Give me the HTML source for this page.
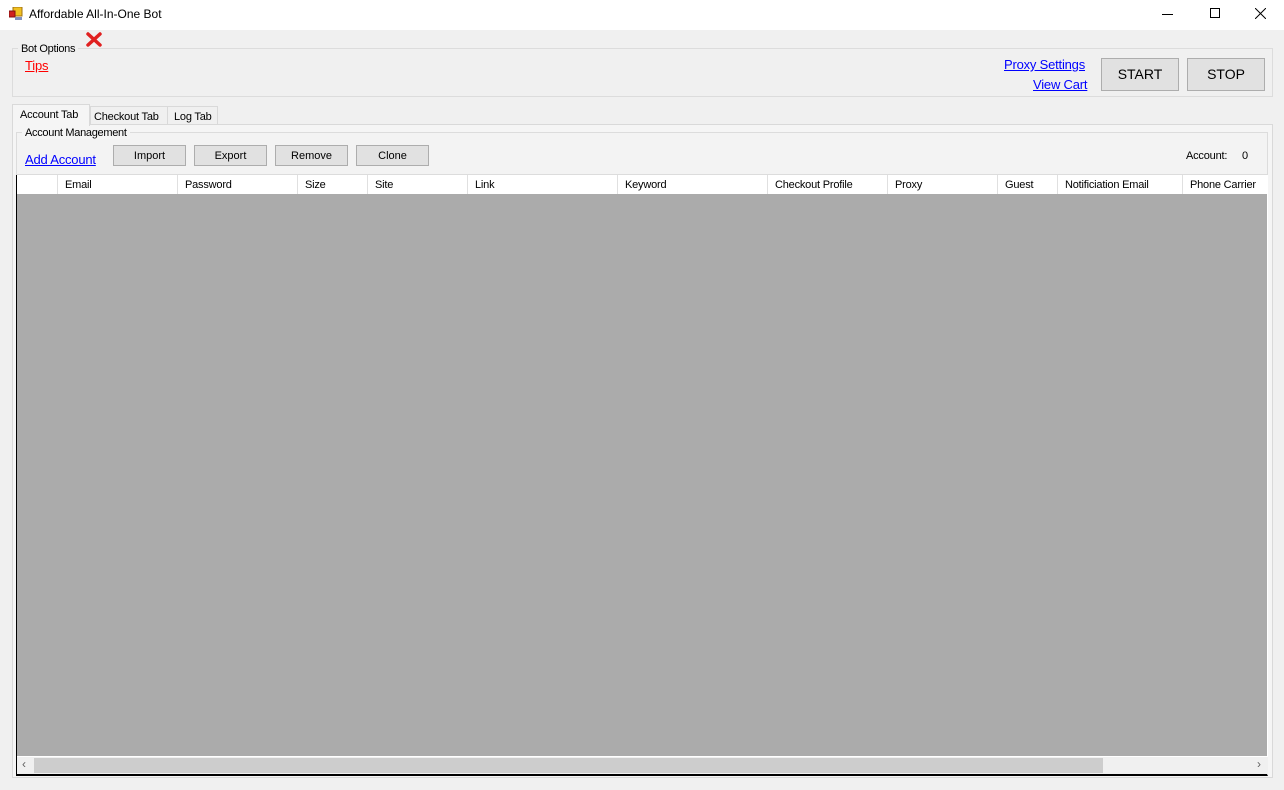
<!DOCTYPE html><html><head><style>
*{margin:0;padding:0;box-sizing:border-box}
body{width:1284px;height:790px;background:#f0f0f0;font-family:"Liberation Sans",sans-serif;font-size:11px;color:#000;position:relative;overflow:hidden}
.a{position:absolute}
.btn{position:absolute;background:#e1e1e1;border:1px solid #adadad;text-align:center}
.lk{position:absolute;color:#0000ff;text-decoration:underline;font-size:13px;white-space:nowrap;letter-spacing:-0.2px}
.col{position:absolute;top:0;height:19px;border-left:1px solid #e0e0e0;padding-left:7px;line-height:21px;white-space:nowrap;letter-spacing:-0.2px}
</style></head><body>
<div class="a" style="left:0;top:0;width:1284px;height:30px;background:#fff"></div>
<svg class="a" style="left:9px;top:7px" width="14" height="14"><rect x="4" y="0" width="9" height="9" fill="#f0c020" stroke="#a07010"/><rect x="0" y="4" width="6" height="6" fill="#d02020" stroke="#801010"/><rect x="6" y="10" width="7" height="3" fill="#8090c0"/></svg>
<div class="a" style="left:29px;top:7px;font-size:12px">Affordable All-In-One Bot</div>
<div class="a" style="left:1162px;top:14px;width:11px;height:1px;background:#000"></div>
<div class="a" style="left:1210px;top:8px;width:10px;height:10px;border:1px solid #000"></div>
<svg class="a" style="left:1255px;top:8px" width="11" height="11"><path d="M0 0L11 11M11 0L0 11" stroke="#000" stroke-width="1"/></svg>

<div class="a" style="left:12px;top:48px;width:1261px;height:49px;border:1px solid #dcdcdc"></div>
<div class="a" style="left:18px;top:43px;padding:0 3px;background:#f0f0f0;letter-spacing:-0.3px">Bot Options</div>
<svg class="a" style="left:86px;top:32px" width="16" height="15"><path d="M2 2L14 13M14 2L2 13" stroke="#e02020" stroke-width="3.5" stroke-linecap="round"/></svg>
<div class="lk" style="left:25px;top:58px;color:#ff0000">Tips</div>
<div class="lk" style="left:1004px;top:57px">Proxy Settings</div>
<div class="lk" style="left:1033px;top:77px">View Cart</div>
<div class="btn" style="left:1101px;top:58px;width:78px;height:33px;line-height:31px;font-size:14px">START</div>
<div class="btn" style="left:1187px;top:58px;width:78px;height:33px;line-height:31px;font-size:14px">STOP</div>

<div class="a" style="left:12px;top:124px;width:1261px;height:654px;border:1px solid #d9d9d9;background:#f5f5f5"></div>
<div class="a" style="left:90px;top:106px;width:78px;height:19px;border:1px solid #d9d9d9;background:#f0f0f0;padding:4px 0 0 3px;letter-spacing:-0.2px">Checkout Tab</div>
<div class="a" style="left:167px;top:106px;width:51px;height:19px;border:1px solid #d9d9d9;background:#f0f0f0;padding:4px 0 0 6px;letter-spacing:-0.2px">Log Tab</div>
<div class="a" style="left:12px;top:104px;width:78px;height:22px;border:1px solid #d9d9d9;border-bottom:none;background:#f5f5f5;padding:4px 0 0 7px;letter-spacing:-0.2px">Account Tab</div>

<div class="a" style="left:16px;top:132px;width:1252px;height:43px;border:1px solid #dcdcdc;background:#f3f3f3"></div>
<div class="a" style="left:22px;top:127px;padding:0 3px;background:#f5f5f5;letter-spacing:-0.3px">Account Management</div>
<div class="lk" style="left:25px;top:152px">Add Account</div>
<div class="btn" style="left:113px;top:145px;width:73px;height:21px;line-height:21px">Import</div>
<div class="btn" style="left:194px;top:145px;width:73px;height:21px;line-height:21px">Export</div>
<div class="btn" style="left:275px;top:145px;width:73px;height:21px;line-height:21px">Remove</div>
<div class="btn" style="left:356px;top:145px;width:73px;height:21px;line-height:21px">Clone</div>
<div class="a" style="left:1186px;top:150px;letter-spacing:-0.2px">Account:</div>
<div class="a" style="left:1242px;top:150px">0</div>

<div class="a" style="left:16px;top:175px;width:1252px;height:601px;background:#ababab;border-left:1px solid #000;border-bottom:2px solid #000;border-right:1px solid #fff">
<div class="a" style="left:0;top:0;width:1251px;height:19px;background:#fff">
<div class="col" style="left:40px">Email</div><div class="col" style="left:160px">Password</div><div class="col" style="left:280px">Size</div><div class="col" style="left:350px">Site</div><div class="col" style="left:450px">Link</div><div class="col" style="left:600px">Keyword</div><div class="col" style="left:750px">Checkout Profile</div><div class="col" style="left:870px">Proxy</div><div class="col" style="left:980px">Guest</div><div class="col" style="left:1040px">Notificiation Email</div><div class="col" style="left:1165px">Phone Carrier</div>
</div>
<div class="a" style="left:0;top:581px;width:1251px;height:18px;background:#f0f0f0;border-top:1px solid #fff"></div>
<div class="a" style="left:17px;top:583px;width:1069px;height:15px;background:#cdcdcd"></div>
<div class="a" style="left:5px;top:582px;color:#606060;font-size:12px">‹</div>
<div class="a" style="left:1240px;top:582px;color:#606060;font-size:12px">›</div>
</div>
</body></html>
